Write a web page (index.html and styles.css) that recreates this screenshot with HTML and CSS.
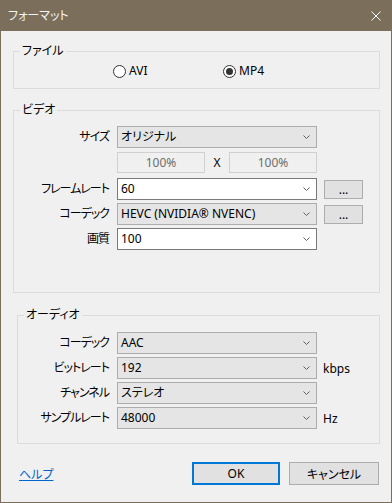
FILE: index.html
```html
<!DOCTYPE html>
<html lang="ja">
<head>
    <meta charset="UTF-8">
    <meta name="viewport" content="width=device-width, initial-scale=1.0">
    <title>フォーマット</title>
    <link rel="stylesheet" href="styles.css">
</head>
<body>
    <div class="window">
        <!-- タイトルバー -->
        <div class="titlebar">
            <span class="title">フォーマット</span>
            <svg class="close" width="10" height="10" viewBox="0 0 10 10">
                <path d="M0.5 0.5 L9.5 9.5 M9.5 0.5 L0.5 9.5" stroke="#ffffff" stroke-width="1" fill="none"/>
            </svg>
        </div>

        <div class="client">
            <!-- ファイル -->
            <div class="group group-file">
                <span class="group-title">ファイル</span>
                <div class="radio-item radio-avi">
                    <span class="radio"></span>
                    <span>AVI</span>
                </div>
                <div class="radio-item">
                    <span class="radio checked"><span class="radio-dot"></span></span>
                    <span>MP4</span>
                </div>
            </div>

            <!-- ビデオ -->
            <div class="group group-video">
                <span class="group-title">ビデオ</span>
                <div class="row">
                    <span class="label">サイズ</span>
                    <div class="combo">
                        <span>オリジナル</span>
                        <svg class="chevron" width="7" height="4" viewBox="0 0 7 4"><polyline points="0.5,0.5 3.5,3.5 6.5,0.5" fill="none" stroke="#606060" stroke-width="1"/></svg>
                    </div>
                </div>
                <div class="row pct-row">
                    <span class="label"></span>
                    <div class="pct">100%</div>
                    <span class="pct-x">X</span>
                    <div class="pct">100%</div>
                </div>
                <div class="row">
                    <span class="label">フレームレート</span>
                    <div class="combo edit">
                        <span>60</span>
                        <svg class="chevron" width="7" height="4" viewBox="0 0 7 4"><polyline points="0.5,0.5 3.5,3.5 6.5,0.5" fill="none" stroke="#606060" stroke-width="1"/></svg>
                    </div>
                    <div class="more">...</div>
                </div>
                <div class="row">
                    <span class="label">コーデック</span>
                    <div class="combo">
                        <span>HEVC (NVIDIA® NVENC)</span>
                        <svg class="chevron" width="7" height="4" viewBox="0 0 7 4"><polyline points="0.5,0.5 3.5,3.5 6.5,0.5" fill="none" stroke="#606060" stroke-width="1"/></svg>
                    </div>
                    <div class="more">...</div>
                </div>
                <div class="row">
                    <span class="label">画質</span>
                    <div class="combo edit">
                        <span>100</span>
                        <svg class="chevron" width="7" height="4" viewBox="0 0 7 4"><polyline points="0.5,0.5 3.5,3.5 6.5,0.5" fill="none" stroke="#606060" stroke-width="1"/></svg>
                    </div>
                </div>
            </div>

            <!-- オーディオ -->
            <div class="group group-audio">
                <span class="group-title">オーディオ</span>
                <div class="row">
                    <span class="label">コーデック</span>
                    <div class="combo">
                        <span>AAC</span>
                        <svg class="chevron" width="7" height="4" viewBox="0 0 7 4"><polyline points="0.5,0.5 3.5,3.5 6.5,0.5" fill="none" stroke="#606060" stroke-width="1"/></svg>
                    </div>
                </div>
                <div class="row">
                    <span class="label">ビットレート</span>
                    <div class="combo">
                        <span>192</span>
                        <svg class="chevron" width="7" height="4" viewBox="0 0 7 4"><polyline points="0.5,0.5 3.5,3.5 6.5,0.5" fill="none" stroke="#606060" stroke-width="1"/></svg>
                    </div>
                    <span class="unit">kbps</span>
                </div>
                <div class="row">
                    <span class="label">チャンネル</span>
                    <div class="combo">
                        <span>ステレオ</span>
                        <svg class="chevron" width="7" height="4" viewBox="0 0 7 4"><polyline points="0.5,0.5 3.5,3.5 6.5,0.5" fill="none" stroke="#606060" stroke-width="1"/></svg>
                    </div>
                </div>
                <div class="row">
                    <span class="label">サンプルレート</span>
                    <div class="combo">
                        <span>48000</span>
                        <svg class="chevron" width="7" height="4" viewBox="0 0 7 4"><polyline points="0.5,0.5 3.5,3.5 6.5,0.5" fill="none" stroke="#606060" stroke-width="1"/></svg>
                    </div>
                    <span class="unit">Hz</span>
                </div>
            </div>

            <!-- ボタン -->
            <div class="footer">
                <a class="help" href="#">ヘルプ</a>
                <div class="btn btn-ok">OK</div>
                <div class="btn btn-cancel">キャンセル</div>
            </div>
        </div>
    </div>
</body>
</html>
```

FILE: styles.css
```css
body {
    margin: 0;
    font-family: "Noto Sans", "Noto Sans CJK JP", sans-serif;
    font-size: 12px;
    font-feature-settings: "palt";
    color: #000;
}

.window {
    width: 392px;
    height: 503px;
    display: flex;
    flex-direction: column;
    background-color: #f0f0f0;
}

.titlebar {
    height: 31px;
    flex: 0 0 31px;
    display: flex;
    align-items: center;
    padding-left: 8px;
    background-color: #7b6f5c;
    color: #f4f4f4;
}

.title {
    flex: 1;
    line-height: 16px;
}

.close {
    margin-right: 11px;
}

.client {
    flex: 1;
    border: 1px solid #7b6f5c;
    border-top: none;
}

/* グループボックス */
.group {
    position: relative;
    box-sizing: border-box;
    border: 1px solid #dcdcdc;
}

.group-title {
    position: absolute;
    top: -8px;
    left: 6px;
    padding: 0 2px;
    line-height: 14px;
    background-color: #f0f0f0;
}

.group-file {
    display: flex;
    margin: 20px 0 0 12px;
    width: 367px;
    height: 38px;
    padding: 11px 0 0 99px;
}

.group-video {
    margin: 21px 0 0 12px;
    width: 367px;
    height: 183px;
    padding-top: 15px;
}

.group-audio {
    margin: 22px 0 0 16px;
    width: 363px;
    height: 129px;
    padding-top: 16px;
}

/* ラジオボタン */
.radio-item {
    display: flex;
    align-items: center;
    height: 16px;
    line-height: 16px;
}

.radio-avi {
    width: 110px;
}

.radio {
    display: flex;
    align-items: center;
    justify-content: center;
    width: 13px;
    height: 13px;
    margin-right: 3px;
    box-sizing: border-box;
    border: 1px solid #333;
    border-radius: 50%;
    background-color: #fff;
}

.radio-dot {
    width: 7px;
    height: 7px;
    border-radius: 50%;
    background-color: #333;
}

/* 行 */
.row {
    display: flex;
    align-items: center;
    margin-top: 3px;
}

.row:first-of-type {
    margin-top: 0;
}

.pct-row {
    margin-top: 4px;
}

.pct-row + .row {
    margin-top: 5px;
}

.label {
    width: 95px;
    margin-right: 8px;
    text-align: right;
    line-height: 16px;
    letter-spacing: -1px;
}

.group-audio .label {
    width: 91px;
}

.combo {
    display: flex;
    align-items: center;
    justify-content: space-between;
    width: 200px;
    height: 22px;
    box-sizing: border-box;
    padding: 0 6px 0 3px;
    border: 1px solid #adadad;
    background-color: #e5e5e5;
    line-height: 16px;
}

.combo.edit {
    border-color: #7a7a7a;
    background-color: #fff;
}

.pct {
    width: 88px;
    height: 21px;
    box-sizing: border-box;
    border: 1px solid #d0d0d0;
    background-color: #f0f0f0;
    color: #6d6d6d;
    text-align: center;
    line-height: 19px;
}

.pct-x {
    width: 24px;
    text-align: center;
}

.more {
    width: 39px;
    height: 19px;
    margin-left: 7px;
    box-sizing: border-box;
    border: 1px solid #adadad;
    background-color: #e1e1e1;
    text-align: center;
    line-height: 17px;
}

.unit {
    margin-left: 6px;
}

/* 下部ボタン */
.footer {
    display: flex;
    align-items: center;
    margin-top: 18px;
    padding: 0 12px 0 18px;
}

.help {
    color: #0066cc;
}

.btn {
    display: flex;
    align-items: center;
    justify-content: center;
    height: 23px;
    box-sizing: border-box;
    border: 1px solid #adadad;
    background-color: #e1e1e1;
}

.btn-ok {
    width: 88px;
    margin-left: auto;
    border: 2px solid #0078d7;
}

.btn-cancel {
    width: 90px;
    margin-left: 9px;
}
```
